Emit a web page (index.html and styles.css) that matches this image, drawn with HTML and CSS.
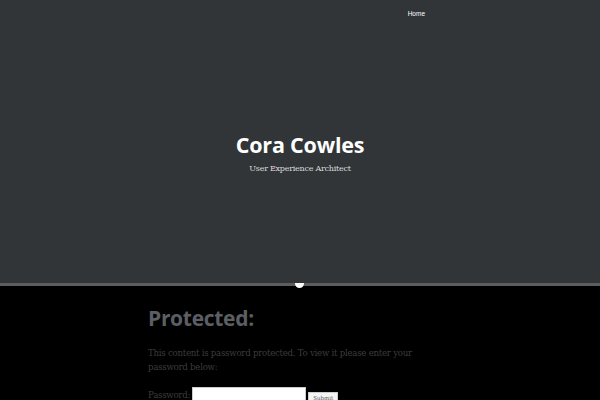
FILE: index.html
```html
<!DOCTYPE html>
<html>
<head>
<meta charset="utf-8">
<link rel="stylesheet" href="styles.css">
</head>
<body>
<header class="site-header">
  <nav class="nav"><a href="#" class="nav-link">Home</a></nav>
  <div class="branding">
    <h1 class="site-title">Cora Cowles</h1>
    <p class="site-desc">User Experience Architect</p>
  </div>
</header>
<div class="divider"><span class="notch"></span></div>
<main class="content">
  <h2 class="entry-title">Protected:</h2>
  <p class="entry-text">This content is password protected. To view it please enter your password below:</p>
  <form class="pw-form">
    <label class="pw-label">Password: <input type="password" class="pw-input"></label>
    <button type="button" class="pw-submit">Submit</button>
  </form>
</main>
</body>
</html>
```
FILE: styles.css
```css
html, body {
  margin: 0;
  padding: 0;
  background: #000;
}
body {
  width: 600px;
  height: 400px;
  overflow: hidden;
  font-family: "DejaVu Serif", serif;
}
.site-header {
  height: 283px;
  background: #313537;
  display: flex;
  flex-direction: column;
  align-items: center;
}
.nav {
  align-self: stretch;
  display: flex;
  justify-content: flex-end;
  padding: 10px 175px 0 0;
  height: 12px;
}
.nav-link {
  font-family: "Liberation Sans", sans-serif;
  font-size: 6.5px;
  color: #fff;
  text-decoration: none;
}
.branding {
  margin-top: 108px;
  text-align: center;
}
.site-title {
  margin: 0;
  font-family: "Open Sans", sans-serif;
  font-weight: 700;
  font-size: 21.5px;
  line-height: 30px;
  color: #fff;
  letter-spacing: -0.2px;
}
.site-desc {
  margin: 3px 0 0;
  font-size: 8px;
  line-height: 12px;
  color: #ddd;
  letter-spacing: -0.25px;
}
.divider {
  height: 3px;
  background: #5b5d5e;
  position: relative;
}
.notch {
  position: absolute;
  left: 295px;
  top: 0;
  width: 9px;
  height: 5px;
  background: #fff;
  border-radius: 0 0 5px 5px;
}
.content {
  width: 304px;
  margin: 0 auto;
  padding-top: 17px;
}
.entry-title {
  margin: 0;
  font-family: "Open Sans", sans-serif;
  font-weight: 700;
  font-size: 21px;
  line-height: 30px;
  color: #5b5f63;
  letter-spacing: -0.3px;
}
.entry-text {
  margin: 13px 0 0;
  font-size: 8.6px;
  line-height: 14px;
  color: #3c3c3c;
  letter-spacing: -0.25px;
}
.pw-form {
  margin-top: 13px;
  display: flex;
  align-items: flex-end;
  gap: 2px;
}
.pw-label {
  font-size: 8.6px;
  color: #3c3c3c;
  letter-spacing: -0.25px;
  display: flex;
  align-items: center;
  gap: 2px;
}
.pw-input {
  width: 112px;
  height: 14px;
  border: 1px solid #ccc;
  padding: 0;
  background: #fff;
}
.pw-submit {
  font-family: "DejaVu Serif", serif;
  font-size: 5.5px;
  padding: 1px 4px;
  height: 11px;
  background: #f4f4f4;
  border: 1px solid #ccc;
  color: #555;
  line-height: 8px;
}
```
